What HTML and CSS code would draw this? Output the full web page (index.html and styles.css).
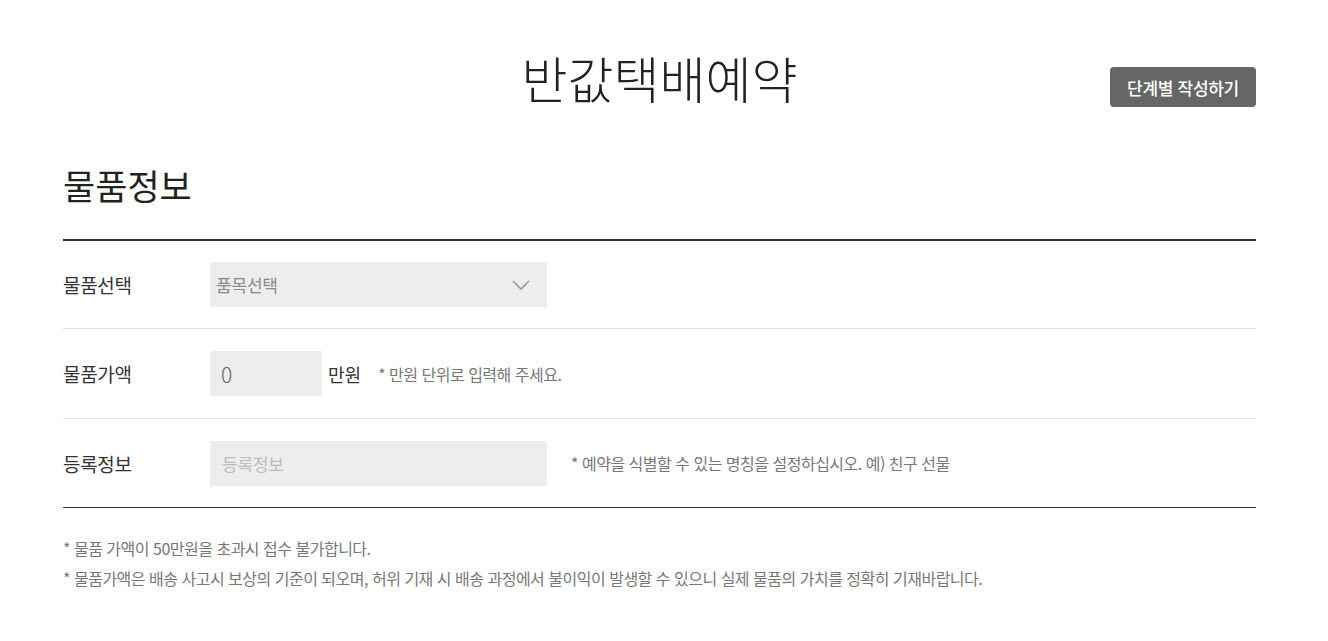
FILE: index.html
```html
<!DOCTYPE html>
<html lang="ko">
<head>
    <meta charset="UTF-8">
    <meta name="viewport" content="width=device-width, initial-scale=1.0">
    <title>반값택배예약</title>
    <link rel="stylesheet" href="styles.css">
</head>
<body>

    <div class="wrap">
        <header class="page-head">
            <h1>반값택배예약</h1>
            <a href="#" class="step-btn">단계별 작성하기</a>
        </header>

        <section class="section">
            <h2>물품정보</h2>

            <div class="form-table">
                <div class="row">
                    <label class="label">물품선택</label>
                    <div class="field">
                        <div class="select-box">
                            <span>품목선택</span>
                            <svg width="20" height="12" viewBox="0 0 20 12"><path d="M2 2 L10 10 L18 2" fill="none" stroke="#999" stroke-width="1.6"/></svg>
                        </div>
                    </div>
                </div>

                <div class="row row-price">
                    <label class="label">물품가액</label>
                    <div class="field">
                        <input type="text" class="input input-price" value="0">
                        <span class="unit">만원</span>
                        <span class="hint">* 만원 단위로 입력해 주세요.</span>
                    </div>
                </div>

                <div class="row">
                    <label class="label">등록정보</label>
                    <div class="field">
                        <input type="text" class="input input-name" placeholder="등록정보">
                        <span class="hint hint-wide">* 예약을 식별할 수 있는 명칭을 설정하십시오. 예) 친구 선물</span>
                    </div>
                </div>
            </div>

            <ul class="notes">
                <li>* 물품 가액이 50만원을 초과시 접수 불가합니다.</li>
                <li>* 물품가액은 배송 사고시 보상의 기준이 되오며, 허위 기재 시 배송 과정에서 불이익이 발생할 수 있으니 실제 물품의 가치를 정확히 기재바랍니다.</li>
            </ul>
        </section>
    </div>

</body>
</html>
```

FILE: styles.css
```css
body {
    font-family: "Noto Sans CJK KR", "Noto Sans", sans-serif;
    background-color: #fff;
    color: #222;
    margin: 0;
    padding: 0;
}
.wrap {
    width: 1193px;
    margin-left: 63px;
}
.page-head {
    display: flex;
    justify-content: center;
    align-items: center;
    position: relative;
    height: 160px;
}
.page-head h1 {
    margin: 0;
    font-size: 50px;
    font-weight: 300;
    color: #222;
    padding-bottom: 6px;
}
.step-btn {
    position: absolute;
    right: 0;
    top: 67px;
    height: 40px;
    width: 146px;
    display: flex;
    align-items: center;
    justify-content: center;
    background-color: #666;
    color: #fff;
    border-radius: 4px;
    font-size: 17px;
    font-weight: 500;
    text-decoration: none;
    letter-spacing: -0.3px;
}
.section h2 {
    margin: -3px 0 3px;
    font-size: 35px;
    font-weight: 400;
    line-height: 56px;
    padding-bottom: 23px;
}
.form-table {
    border-top: 2px solid #333;
    border-bottom: 1px solid #333;
}
.row {
    display: flex;
    align-items: center;
    height: 88px;
    box-sizing: border-box;
    border-bottom: 1px solid #ddd;
}
.row-price {
    height: 90px;
}
.row:last-child {
    border-bottom: none;
}
.label {
    width: 147px;
    font-size: 19px;
    letter-spacing: -0.3px;
    color: #333;
}
.field {
    display: flex;
    align-items: center;
}
.select-box {
    width: 337px;
    height: 45px;
    background-color: #ededed;
    display: flex;
    align-items: center;
    justify-content: space-between;
    padding: 0 16px 0 6px;
    box-sizing: border-box;
    font-size: 17px;
    color: #888;
    letter-spacing: -0.2px;
}
.input {
    height: 45px;
    border: none;
    background-color: #ededed;
    box-sizing: border-box;
    font-family: inherit;
    outline: none;
    margin: 0;
}
.input-price {
    width: 112px;
    padding: 0 11px;
    font-size: 21px;
    font-weight: 300;
    color: #666;
}
.input-name {
    width: 337px;
    padding: 0 12px;
    font-size: 17px;
    letter-spacing: -0.2px;
}
.input-name::placeholder {
    color: #bbb;
}
.unit {
    margin-left: 6px;
    font-size: 18px;
    color: #333;
}
.hint {
    margin-left: 17px;
    font-size: 16px;
    color: #777;
    letter-spacing: -0.5px;
}
.hint-wide {
    margin-left: 24px;
}
.notes {
    list-style: none;
    margin: 0;
    padding: 25px 0 0;
}
.notes li {
    font-size: 16px;
    color: #777;
    line-height: 30px;
    letter-spacing: -0.5px;
}
```
